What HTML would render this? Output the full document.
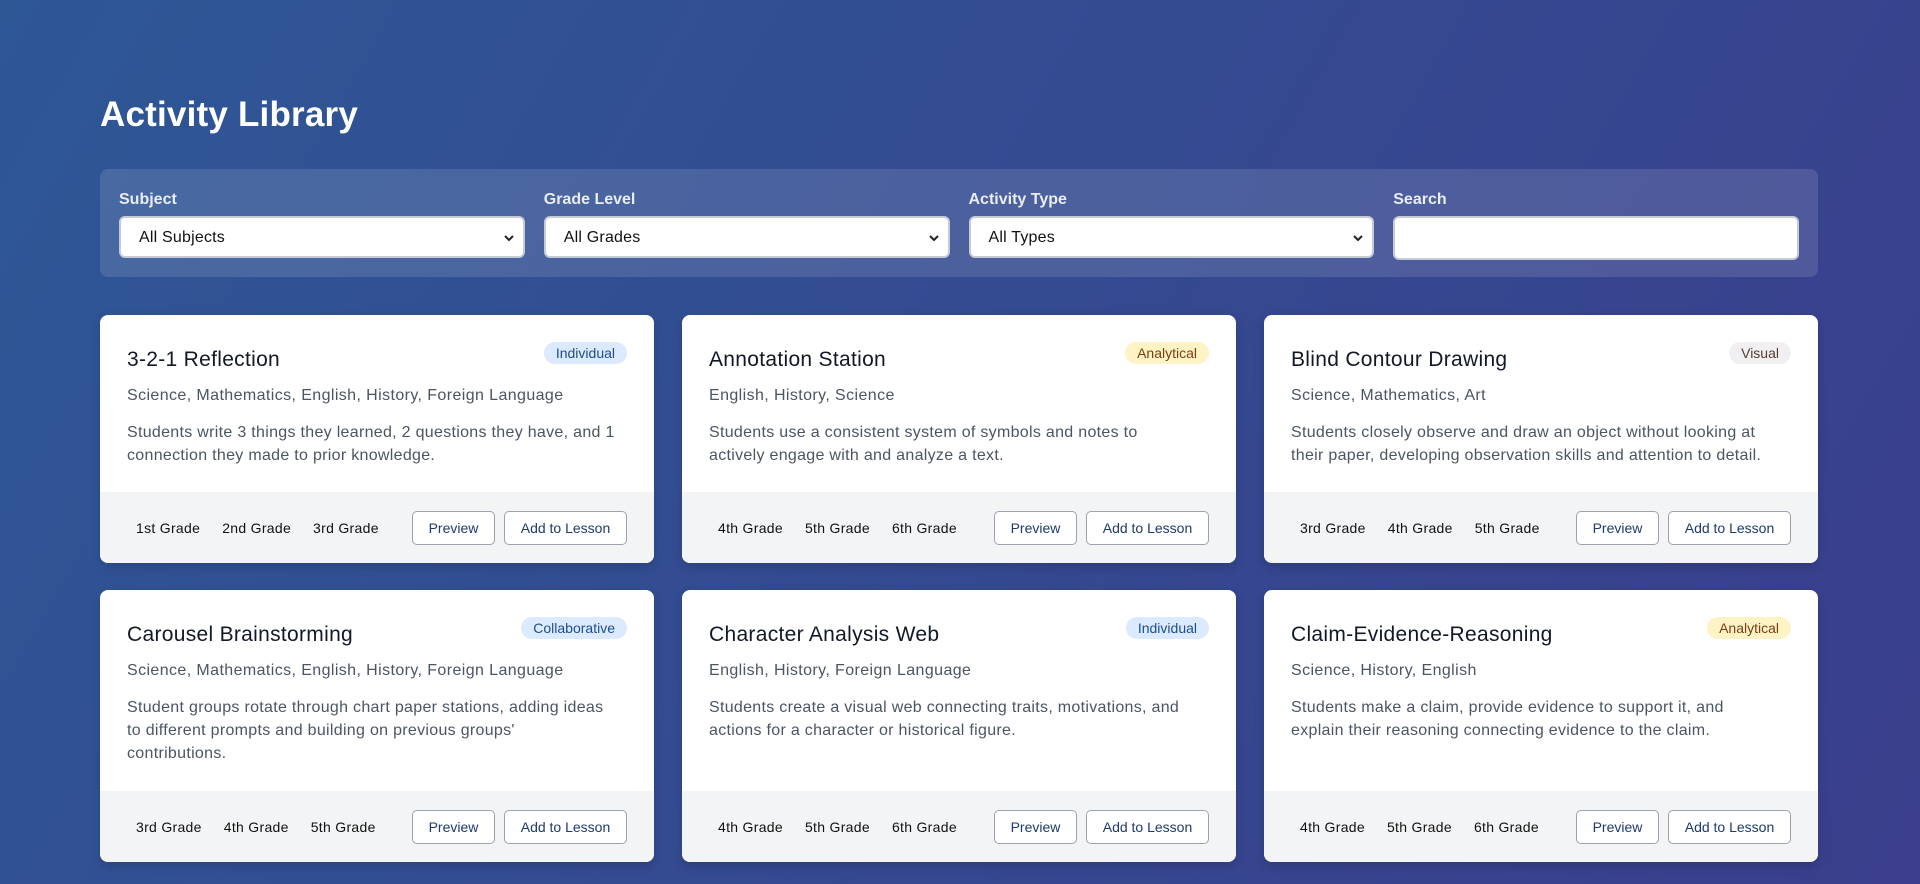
<!DOCTYPE html>
<html><head><meta charset="utf-8"><style>
*{box-sizing:border-box;margin:0;padding:0}
body{width:1920px;height:884px;overflow:hidden;font-family:"Liberation Sans",sans-serif;background:linear-gradient(120deg,#2e5796 0%,#344a91 50%,#3a3e8c 100%);position:relative}
h1{position:absolute;left:100px;top:95px;font-size:35px;color:#fff;font-weight:bold;letter-spacing:0.2px}
.filters{position:absolute;left:100px;top:169px;width:1718px;height:108px;background:rgba(255,255,255,0.12);border-radius:8px;padding:22px 19px 0;display:flex;gap:19px}
.f{width:406px}
.f label{display:block;color:#e8ecf5;font-size:16px;font-weight:bold;margin-bottom:7px;height:18px}
.sel{height:42px;background:#fff;border:2px solid #c4cad6;border-radius:6px;font-size:16px;color:#111;padding:11px 18px;position:relative;letter-spacing:0.2px}
.sel svg{position:absolute;right:8px;top:15px}
.grid{position:absolute;left:100px;top:315px;display:grid;grid-template-columns:554px 554px 554px;grid-template-rows:248px 272px;column-gap:28px;row-gap:27px}
.card{background:#fff;border-radius:8px;position:relative;overflow:hidden;box-shadow:0 4px 10px rgba(0,0,0,.15)}
.card h3{position:absolute;left:27px;top:33px;font-size:21px;font-weight:normal;color:#111827;letter-spacing:0.3px}
.badge{position:absolute;right:27px;top:27px;height:22px;padding:0 12px;border-radius:11px;font-size:14px;line-height:22px}
.ind{background:#dbeafe;color:#1e4e8c}.ana{background:#fdf3c4;color:#7a3e12}.vis{background:#f0f0f2;color:#5a3a2a}.col{background:#dbeafe;color:#1e4e8c}
.sub{position:absolute;left:27px;top:72px;font-size:16px;color:#4b5563;letter-spacing:0.4px}
.desc{position:absolute;left:27px;top:106px;font-size:16px;line-height:23px;color:#4b5563;letter-spacing:0.3px;white-space:nowrap}
.foot{position:absolute;left:0;right:0;bottom:0;height:71px;background:#f3f4f6;display:flex;align-items:center;padding:0 27px 0 36px}
.g{font-size:14px;color:#111;margin-right:22px;letter-spacing:0.3px}
.sp{flex:1}
.btn{height:34px;border:1px solid #9ca3af;border-radius:5px;background:#fff;color:#1e3a6e;font-size:14px;line-height:32px;text-align:center}
.pv{width:83px;margin-right:9px}.ad{width:123px}
</style></head><body>
<h1>Activity Library</h1>
<div class="filters">
<div class="f"><label>Subject</label><div class="sel">All Subjects<svg width="12" height="10" viewBox="0 0 12 10"><path d="M2 3l4 4 4-4" stroke="#222" stroke-width="2" fill="none"/></svg></div></div>
<div class="f"><label>Grade Level</label><div class="sel">All Grades<svg width="12" height="10" viewBox="0 0 12 10"><path d="M2 3l4 4 4-4" stroke="#222" stroke-width="2" fill="none"/></svg></div></div>
<div class="f"><label>Activity Type</label><div class="sel">All Types<svg width="12" height="10" viewBox="0 0 12 10"><path d="M2 3l4 4 4-4" stroke="#222" stroke-width="2" fill="none"/></svg></div></div>
<div class="f"><label>Search</label><div class="sel" style="height:44px"></div></div>
</div>
<div class="grid">
<div class="card"><h3>3-2-1 Reflection</h3><span class="badge ind">Individual</span><div class="sub">Science, Mathematics, English, History, Foreign Language</div><div class="desc">Students write 3 things they learned, 2 questions they have, and 1<br>connection they made to prior knowledge.</div><div class="foot"><span class="g">1st Grade</span><span class="g">2nd Grade</span><span class="g">3rd Grade</span><span class="sp"></span><div class="btn pv">Preview</div><div class="btn ad">Add to Lesson</div></div></div>
<div class="card"><h3>Annotation Station</h3><span class="badge ana">Analytical</span><div class="sub">English, History, Science</div><div class="desc">Students use a consistent system of symbols and notes to<br>actively engage with and analyze a text.</div><div class="foot"><span class="g">4th Grade</span><span class="g">5th Grade</span><span class="g">6th Grade</span><span class="sp"></span><div class="btn pv">Preview</div><div class="btn ad">Add to Lesson</div></div></div>
<div class="card"><h3>Blind Contour Drawing</h3><span class="badge vis">Visual</span><div class="sub">Science, Mathematics, Art</div><div class="desc">Students closely observe and draw an object without looking at<br>their paper, developing observation skills and attention to detail.</div><div class="foot"><span class="g">3rd Grade</span><span class="g">4th Grade</span><span class="g">5th Grade</span><span class="sp"></span><div class="btn pv">Preview</div><div class="btn ad">Add to Lesson</div></div></div>
<div class="card"><h3>Carousel Brainstorming</h3><span class="badge col">Collaborative</span><div class="sub">Science, Mathematics, English, History, Foreign Language</div><div class="desc">Student groups rotate through chart paper stations, adding ideas<br>to different prompts and building on previous groups'<br>contributions.</div><div class="foot"><span class="g">3rd Grade</span><span class="g">4th Grade</span><span class="g">5th Grade</span><span class="sp"></span><div class="btn pv">Preview</div><div class="btn ad">Add to Lesson</div></div></div>
<div class="card"><h3>Character Analysis Web</h3><span class="badge ind">Individual</span><div class="sub">English, History, Foreign Language</div><div class="desc">Students create a visual web connecting traits, motivations, and<br>actions for a character or historical figure.</div><div class="foot"><span class="g">4th Grade</span><span class="g">5th Grade</span><span class="g">6th Grade</span><span class="sp"></span><div class="btn pv">Preview</div><div class="btn ad">Add to Lesson</div></div></div>
<div class="card"><h3>Claim-Evidence-Reasoning</h3><span class="badge ana">Analytical</span><div class="sub">Science, History, English</div><div class="desc">Students make a claim, provide evidence to support it, and<br>explain their reasoning connecting evidence to the claim.</div><div class="foot"><span class="g">4th Grade</span><span class="g">5th Grade</span><span class="g">6th Grade</span><span class="sp"></span><div class="btn pv">Preview</div><div class="btn ad">Add to Lesson</div></div></div>
</div>
</body></html>
